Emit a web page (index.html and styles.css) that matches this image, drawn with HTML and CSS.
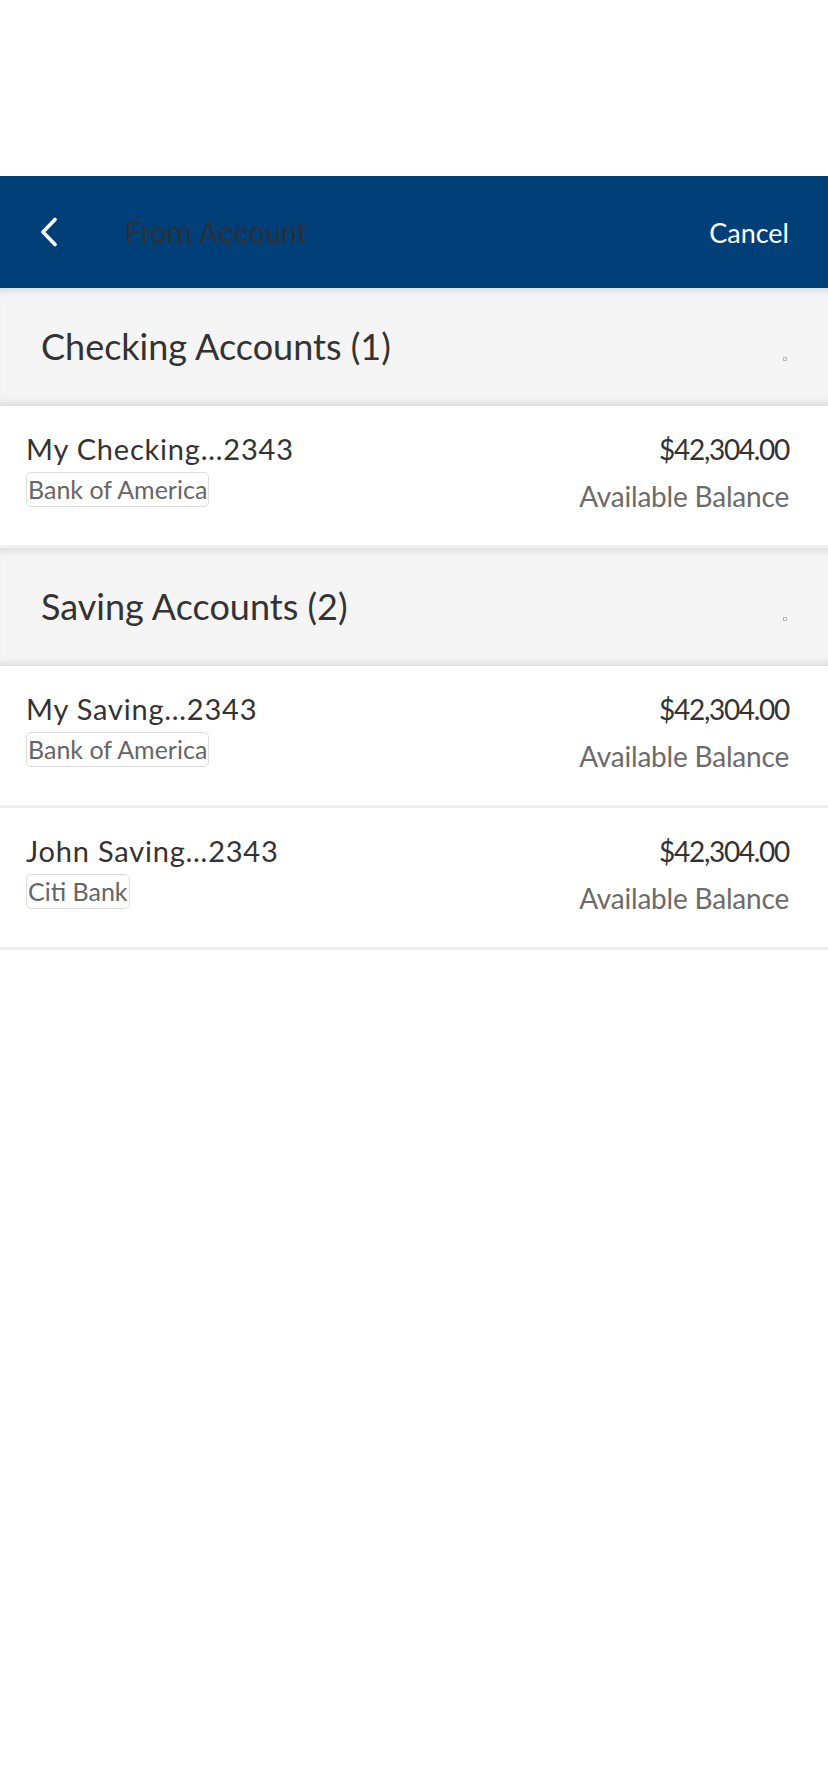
FILE: index.html
```html
<!DOCTYPE html>
<html lang="en">
<head>
<meta charset="utf-8">
<title>From Account</title>
<link rel="stylesheet" href="styles.css">
</head>
<body>
<div class="status-area"></div>
<header class="header">
  <button class="back" aria-label="Back">
    <svg width="18" height="30" viewBox="0 0 18 30"><path d="M15 2.5 L3 15 L15 27.5" fill="none" stroke="#fff" stroke-width="3.6" stroke-linecap="round" stroke-linejoin="round"/></svg>
  </button>
  <h1 class="title">From Account</h1>
  <span class="cancel">Cancel</span>
</header>

<section class="group">
  <div class="group-head">
    <h2 class="group-title">Checking Accounts (1)</h2>
    <span class="dot"></span>
  </div>
  <div class="row">
    <div class="left">
      <div class="name">My Checking…2343</div>
      <span class="badge">Bank of America</span>
    </div>
    <div class="right">
      <div class="amount">$42,304.00</div>
      <div class="label">Available Balance</div>
    </div>
  </div>
</section>

<section class="group">
  <div class="group-head">
    <h2 class="group-title">Saving Accounts (2)</h2>
    <span class="dot"></span>
  </div>
  <div class="row">
    <div class="left">
      <div class="name">My Saving…2343</div>
      <span class="badge">Bank of America</span>
    </div>
    <div class="right">
      <div class="amount">$42,304.00</div>
      <div class="label">Available Balance</div>
    </div>
  </div>
  <div class="row">
    <div class="left">
      <div class="name">John Saving…2343</div>
      <span class="badge">Citi Bank</span>
    </div>
    <div class="right">
      <div class="amount">$42,304.00</div>
      <div class="label">Available Balance</div>
    </div>
  </div>
</section>
</body>
</html>
```

FILE: styles.css
```css
* { box-sizing: border-box; }
body {
  margin: 0;
  background: #fff;
  font-family: "Lato", "Open Sans", sans-serif;
  color: #333;
}
.status-area { height: 176px; }
.header {
  position: relative;
  z-index: 2;
  height: 112px;
  background: #013f78;
  display: flex;
  align-items: center;
  padding: 0 39px 0 40px;
}
.back {
  background: none;
  border: 0;
  padding: 0;
  width: 18px;
  height: 30px;
  display: flex;
}
.title {
  margin: 2px 0 0 67px;
  font-family: "Roboto", sans-serif;
  font-weight: 400;
  font-size: 29px;
  color: #2b3138;
  flex: 1;
}
.cancel {
  color: #fff;
  font-size: 27px;
}
.group-head {
  height: 118px;
  background: #f5f5f5;
  display: flex;
  justify-content: space-between;
  padding: 0 41px 0 41px;
  box-shadow: inset 0 10px 10px -8px rgba(0,0,0,0.13), inset 0 -10px 10px -8px rgba(0,0,0,0.13);
}
.group-title {
  margin: 0;
  padding-top: 36px;
  font-size: 36px;
  font-weight: 400;
  color: #333;
}
.dot {
  align-self: flex-end;
  margin-bottom: 45px;
  width: 4px;
  height: 4px;
  border: 1px solid #bbb;
}
.row {
  height: 142px;
  border-bottom: 3px solid #efefef;
  display: flex;
  justify-content: space-between;
  padding: 0 39px 0 26px;
}
.left, .right { display: flex; flex-direction: column; }
.right { align-items: flex-end; }
.name {
  font-size: 29px;
  letter-spacing: 0.8px;
  line-height: 34px;
  margin-top: 26px;
  color: #333;
}
.badge {
  align-self: flex-start;
  margin-top: 6px;
  height: 35px;
  padding: 0 1px;
  border: 1.5px solid #ddd;
  border-radius: 5px;
  font-size: 25px;
  line-height: 32px;
  color: #666;
}
.amount {
  font-size: 28px;
  letter-spacing: -1.3px;
  line-height: 34px;
  margin-top: 26px;
  color: #333;
}
.label {
  font-size: 28px;
  letter-spacing: -0.2px;
  line-height: 34px;
  margin-top: 13px;
  color: #6b6b6b;
}
```
